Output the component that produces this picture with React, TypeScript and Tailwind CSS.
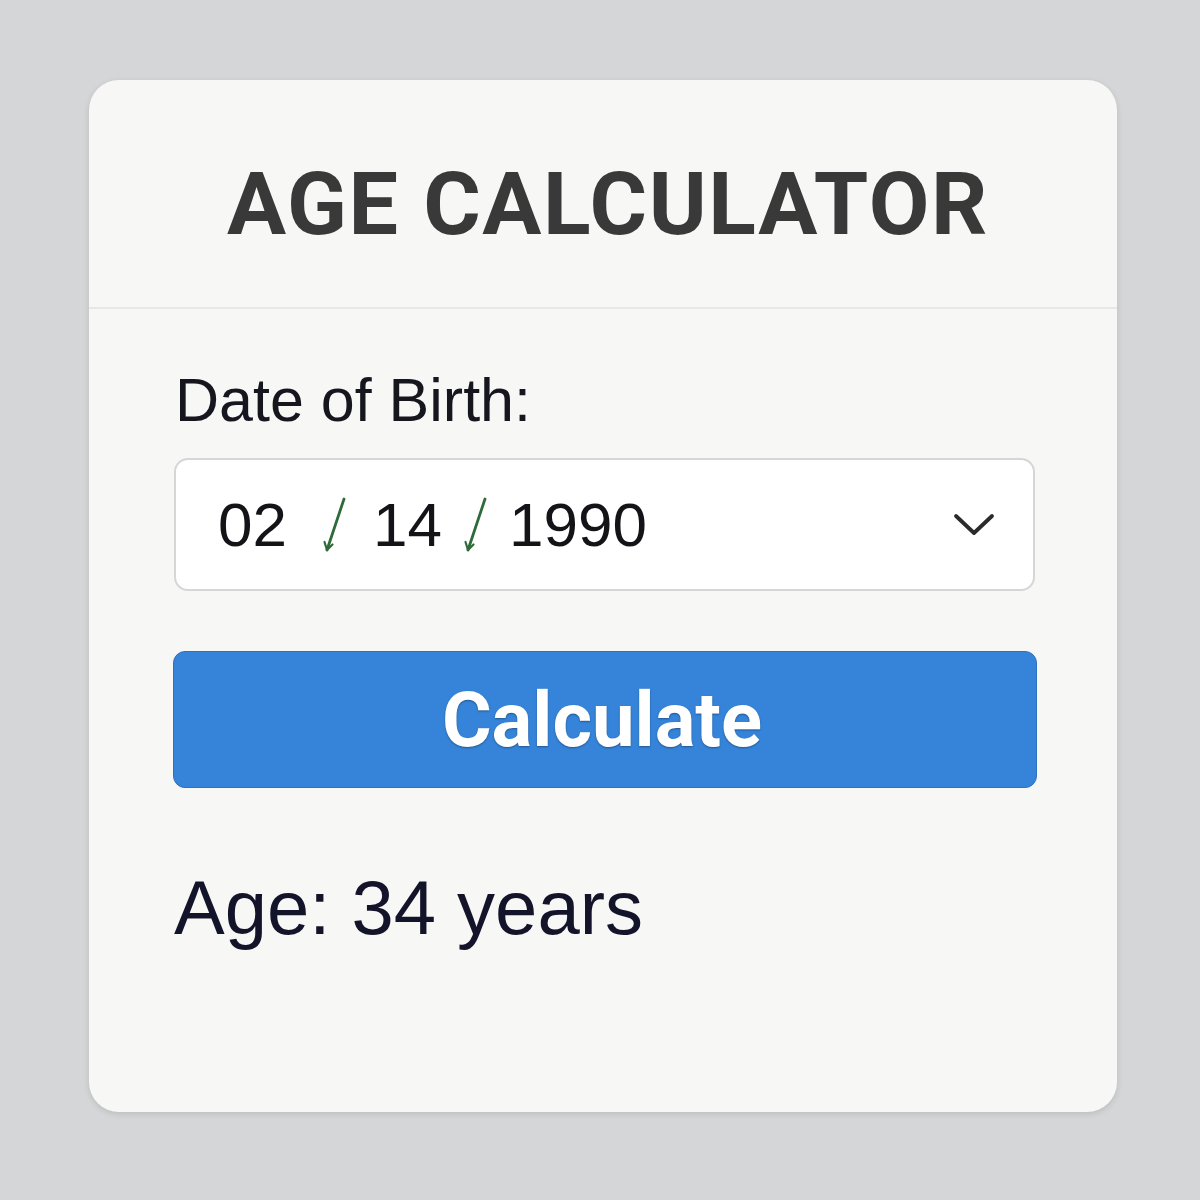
import React from "react";

function Slash() {
  return (
    <svg width="28" height="58" viewBox="0 0 28 58" fill="none" className="shrink-0">
      <path d="M23 3 L6 54" stroke="#2f6b3a" strokeWidth="2.8" strokeLinecap="round" />
      <path d="M3.5 46 L6 54 L11.5 48.5" stroke="#2f6b3a" strokeWidth="2.2" strokeLinecap="round" strokeLinejoin="round" />
    </svg>
  );
}

function Chevron() {
  return (
    <svg width="42" height="26" viewBox="0 0 42 26" fill="none">
      <path d="M3 4 L21 21 L39 4" stroke="#2b2b2b" strokeWidth="3.8" strokeLinecap="round" strokeLinejoin="round" />
    </svg>
  );
}

export default function App() {
  const sans = { fontFamily: '"Liberation Sans", Arial, sans-serif' };
  const roboto = { fontFamily: 'Roboto, "Liberation Sans", Arial, sans-serif' };
  return (
    <div className="w-[1200px] h-[1200px] bg-[#d5d6d8] pt-[80px] pl-[89px]" style={sans}>
      <div className="w-[1028px] h-[1032px] rounded-[30px] bg-[#f7f7f6] shadow-[0_2px_6px_rgba(0,0,0,0.12)] flex flex-col">
        <div className="h-[229px] pt-[20px] pl-[10px] flex items-center justify-center border-b-2 border-[#e7e7e7]">
          <h1 className="text-[88px] leading-none font-bold text-[#393939] tracking-[1.6px]" style={roboto}>AGE CALCULATOR</h1>
        </div>
        <div className="px-[86px] pt-[61px] flex flex-col">
          <label className="text-[61px] leading-none text-[#16161e]">Date of Birth:</label>
          <div className="mt-[27px] h-[133px] w-[861px] -ml-[1px] rounded-[14px] border-2 border-[#d6d6d6] bg-white flex items-center pl-[42px] pr-[38px] text-[62px] leading-none text-[#141418]">
            <span>02</span>
            <span className="ml-[34px] flex"><Slash /></span>
            <span className="ml-[24px]">14</span>
            <span className="ml-[20px] flex"><Slash /></span>
            <span className="ml-[19px]">1990</span>
            <span className="ml-auto flex"><Chevron /></span>
          </div>
          <button className="mt-[60px] h-[137px] w-[864px] -ml-[2px] rounded-[12px] bg-[#3584d9] border border-[#2d71c2] flex items-center justify-center text-white text-[76px] font-bold leading-none [text-shadow:0_1px_2px_rgba(0,0,0,0.35)]" style={roboto}>
            <span className="-ml-[6px]">Calculate</span>
          </button>
          <div className="mt-[82px] text-[76px] leading-none text-[#13132a] -ml-[1px]">Age: 34 years</div>
        </div>
      </div>
    </div>
  );
}
